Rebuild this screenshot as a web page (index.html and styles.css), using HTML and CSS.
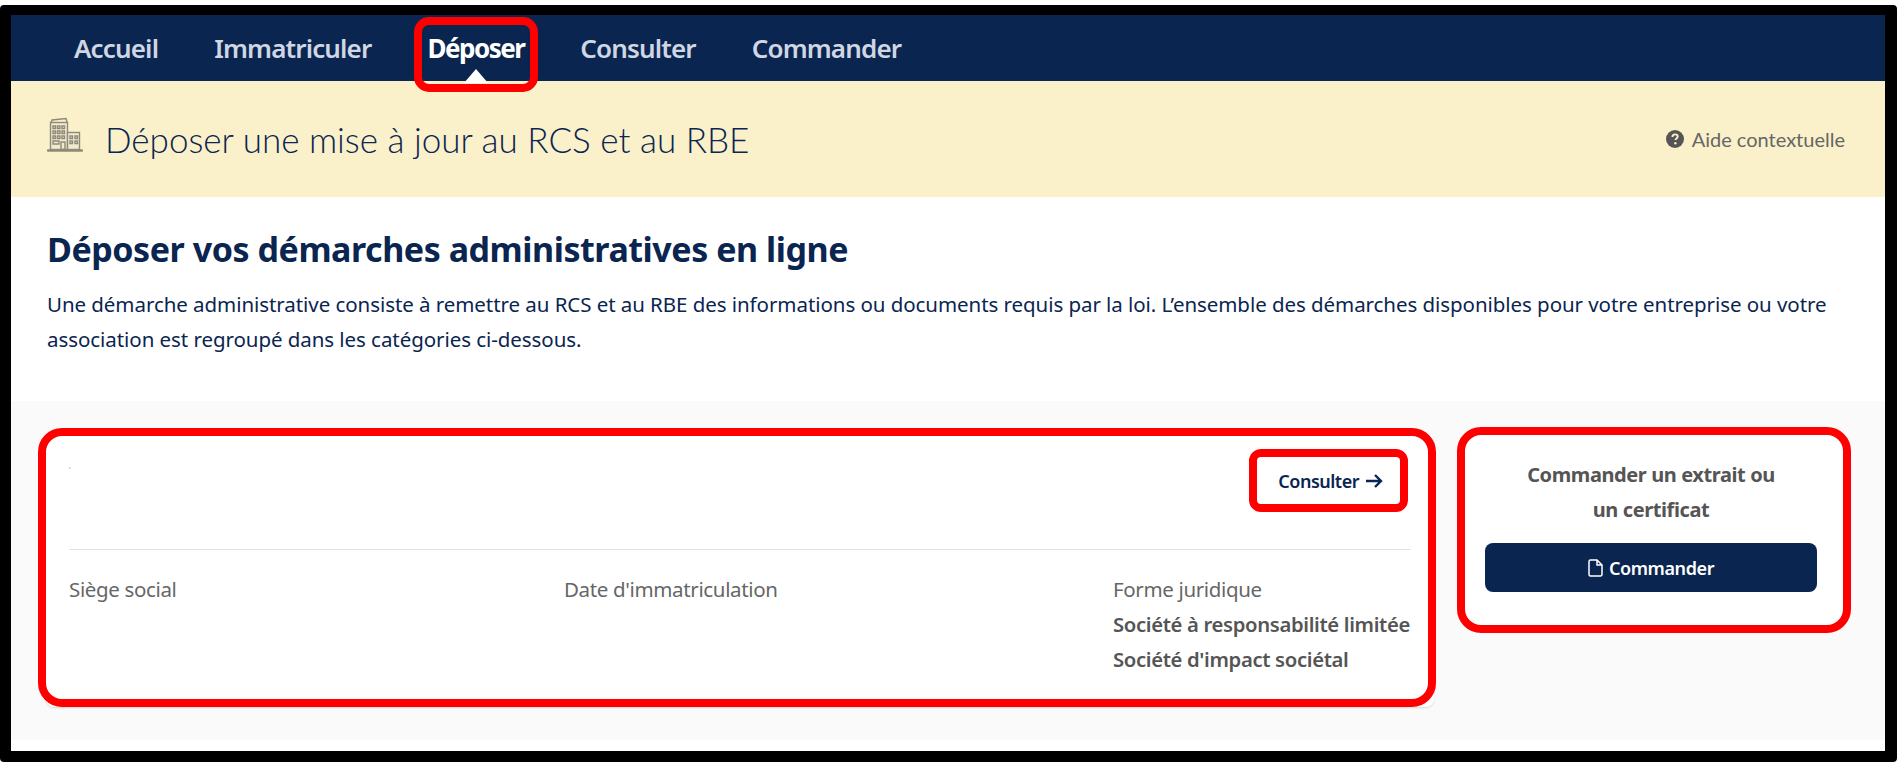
FILE: index.html
```html
<!DOCTYPE html>
<html lang="fr">
<head>
<meta charset="utf-8">
<title>Déposer une mise à jour au RCS et au RBE</title>
<link rel="stylesheet" href="styles.css">
</head>
<body>
<div class="frame">
  <nav class="nav">
    <a class="nav-item">Accueil</a>
    <a class="nav-item">Immatriculer</a>
    <a class="nav-item is-active">Déposer</a>
    <a class="nav-item">Consulter</a>
    <a class="nav-item">Commander</a>
  </nav>
  <header class="banner">
    <div class="banner-title">
      <svg class="banner-icon" viewBox="0 0 36 36" fill="none" stroke="#8f8a78" stroke-width="1.4">
        <path d="M4 6.5 L5 3 L19 1.5 L20 5"/>
        <rect x="3.5" y="5.5" width="17" height="27" fill="#f2ead0"/>
        <rect x="20.5" y="15.5" width="12" height="17" fill="#f2ead0"/>
        <path d="M6 9h2.5v2.5H6zM10.5 9H13v2.5h-2.500zM15 9h2.500v2.500H15zM6 14h2.500v2.500H6zM10.500 14H13v2.500h-2.500zM15 14h2.500v2.500H15zM6 19h2.500v2.500H6zM10.500 19H13v2.500h-2.500zM15 19h2.500v2.500H15zM23 19h2.500v2.500H23zM28 19h2.500v2.500H28zM23 24h2.500v2.500H23zM28 24h2.500v2.500H28zM6 24h6v3H6zM14 25h4v7.500h-4z"/>
        <path d="M1 33.500h34" stroke-width="2.400" stroke-linecap="round"/>
      </svg>
      <h1 class="banner-heading">Déposer une mise à jour au RCS et au RBE</h1>
    </div>
    <a class="help">
      <svg class="help-icon" viewBox="0 0 18 18"><circle cx="9" cy="9" r="9" fill="#555"/><path d="M6.400 7c0-1.700 1.200-2.600 2.700-2.600s2.600.9 2.600 2.200c0 1.800-2.200 1.800-2.200 3.400" fill="none" stroke="#faf0ca" stroke-width="1.900"/><circle cx="9.400" cy="13.200" r="1.200" fill="#faf0ca"/></svg>
      Aide contextuelle
    </a>
  </header>
  <section class="intro">
    <h2 class="intro-title">Déposer vos démarches administratives en ligne</h2>
    <p class="intro-text">Une démarche administrative consiste à remettre au RCS et au RBE des informations ou documents requis par la loi. L’ensemble des démarches disponibles pour votre entreprise ou votre<br>association est regroupé dans les catégories ci-dessous.</p>
  </section>
  <main class="content">
    <article class="card card-info">
      <div class="card-top">
        <span class="speck"></span>
        <a class="consult">Consulter
          <svg class="consult-arrow" viewBox="0 0 18 16" fill="none" stroke="#0a2550" stroke-width="2.400"><path d="M1 8h15M10 2l6 6-6 6"/></svg>
        </a>
      </div>
      <div class="facts">
        <div class="fact fact-seat">Siège social</div>
        <div class="fact fact-date">Date d'immatriculation</div>
        <div class="fact fact-form">Forme juridique
          <strong class="fact-value">Société à responsabilité limitée</strong>
          <strong class="fact-value">Société d'impact sociétal</strong>
        </div>
      </div>
    </article>
    <aside class="card card-order">
      <h3 class="order-title">Commander un extrait ou<br>un certificat</h3>
      <a class="order-button">
        <svg class="order-icon" viewBox="0 0 15 18" fill="none" stroke="#fff" stroke-width="1.500"><path d="M2.500 1h6.500l5 5v9.500a1.500 1.500 0 0 1-1.500 1.500h-10A1.500 1.500 0 0 1 1 15.500v-13A1.500 1.500 0 0 1 2.500 1zM9 1v5h5"/></svg>
        Commander
      </a>
    </aside>
  </main>
</div>
</body>
</html>
```
FILE: styles.css
```css
* { box-sizing: border-box; }
*::before, *::after { box-sizing: border-box; }
html, body { margin: 0; padding: 0; }
body {
  background: #fff;
  padding-top: 5px;
  height: 763px;
  overflow: hidden;
  font-family: "Noto Sans", "Liberation Sans", sans-serif;
  color: #0a2550;
}
.frame {
  border: solid #000;
  border-width: 10px 12px 11px 11px;
  border-radius: 4px;
  height: 757px;
  background: #fff;
  display: flex;
  flex-direction: column;
}
.nav {
  height: 66px;
  flex: none;
  background: #0a2550;
  display: flex;
  align-items: center;
  padding-left: 63px;
  gap: 56px;
}
.nav-item {
  position: relative;
  font-size: 26px;
  font-weight: 600;
  letter-spacing: -0.85px;
  color: #cfd6e4;
  height: 66px;
  line-height: 67px;
}
.nav-item.is-active { color: #fff; font-weight: 700; letter-spacing: -1.5px; }
.nav-item.is-active::before {
  content: "";
  position: absolute;
  left: 50%;
  bottom: -2px;
  margin-left: -12px;
  border: solid transparent;
  border-width: 0 12px 14px;
  border-bottom-color: #fff;
}
.nav-item.is-active::after {
  content: "";
  position: absolute;
  left: -13px;
  right: -14px;
  top: 2px;
  height: 75px;
  border: 8px solid #f00;
  border-radius: 15px;
}
.banner {
  height: 116px;
  flex: none;
  background: #faf0ca;
  display: flex;
  align-items: center;
  justify-content: space-between;
  padding: 0 40px 0 36px;
}
.banner-title { display: flex; align-items: center; gap: 22px; }
.banner-icon { width: 36px; height: 36px; margin-top: -8px; }
.banner-heading {
  margin: 0;
  font-family: Lato, "Noto Sans", sans-serif;
  font-weight: 300;
  font-size: 35px;
  color: #0a2550;
}
.help {
  display: flex;
  align-items: center;
  gap: 8px;
  font-family: Lato, "Noto Sans", sans-serif;
  font-size: 20px;
  color: #666;
}
.help-icon { width: 18px; height: 18px; }
.intro {
  height: 204px;
  flex: none;
  padding: 30px 36px 0;
}
.intro-title {
  margin: 0 0 16px;
  font-size: 34px;
  line-height: 44px;
  font-weight: 700;
  letter-spacing: -0.45px;
  color: #0a2550;
}
.intro-text {
  margin: 0;
  font-size: 20.5px;
  line-height: 35px;
  letter-spacing: -0.06px;
  color: #0a2550;
}
.content {
  height: 339px;
  flex: none;
  background: #fafafa;
  display: grid;
  grid-template-columns: 1388px 378px;
  column-gap: 31px;
  align-items: start;
  padding: 33px 0 0 35px;
}
.card {
  position: relative;
  background: #fff;
  border-radius: 8px;
}
.card::after {
  content: "";
  position: absolute;
  border: 8px solid #f00;
  border-radius: 24px;
  pointer-events: none;
}
.card-info {
  height: 273px;
  padding: 0 23px;
  box-shadow: 0 1px 2px #d8d8d8;
}
.card-info::after { inset: -6px -2px 0 -8px; }
.card-top {
  height: 116px;
  border-bottom: 1px solid #e2e2e2;
  display: flex;
  justify-content: space-between;
  align-items: flex-start;
  position: relative;
}
.speck { width: 2px; height: 2px; margin-top: 33px; background: #ddd; }
.consult {
  position: relative;
  display: flex;
  align-items: center;
  gap: 6px;
  margin: 32px 28px 0 0;
  height: 30px;
  font-size: 18px;
  font-weight: 600;
  letter-spacing: -0.5px;
  color: #0a2550;
}
.consult::after {
  content: "";
  position: absolute;
  left: -29px;
  right: -25px;
  top: -17px;
  bottom: -16px;
  border: 8px solid #f00;
  border-radius: 12px;
}
.consult-arrow { width: 18px; height: 16px; }
.facts {
  display: grid;
  grid-template-columns: 495px 549px 1fr;
  padding: 22px 0 0;
  font-size: 20.5px;
  line-height: 35px;
  letter-spacing: -0.35px;
  color: #666;
}
.fact-form { white-space: nowrap; }
.fact-value {
  display: block;
  font-weight: 600;
  font-size: 20.3px;
  color: #555;
}
.card-order {
  height: 191px;
  padding: 23px 26px 0 20px;
  text-align: center;
}
.card-order::after { inset: -7px -8px -8px -8px; }
.order-title {
  margin: 0 0 16px;
  font-size: 20px;
  line-height: 35px;
  font-weight: 700;
  letter-spacing: -0.4px;
  color: #555;
}
.order-button {
  height: 49px;
  background: #0a2550;
  border-radius: 8px;
  color: #fff;
  display: flex;
  align-items: center;
  justify-content: center;
  gap: 6px;
  font-size: 18px;
  font-weight: 600;
  letter-spacing: -0.4px;
}
.order-icon { width: 15px; height: 18px; }
```
